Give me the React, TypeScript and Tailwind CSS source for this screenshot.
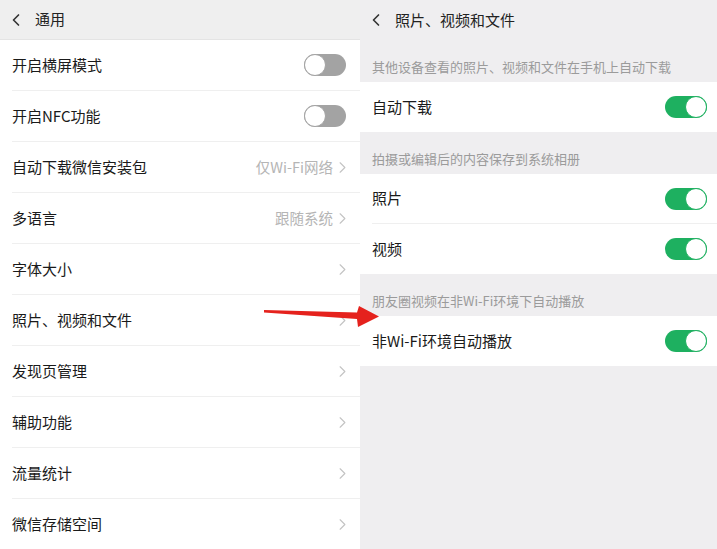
import { ChevronRight, ChevronLeft } from "lucide-react";

const FONT = { fontFamily: '"Noto Sans CJK SC", "Noto Sans", sans-serif' };

type Row = { label: string; kind: "toggle" | "link"; value?: string };

const generalRows: Row[] = [
  { label: "开启横屏模式", kind: "toggle" },
  { label: "开启NFC功能", kind: "toggle" },
  { label: "自动下载微信安装包", kind: "link", value: "仅Wi-Fi网络" },
  { label: "多语言", kind: "link", value: "跟随系统" },
  { label: "字体大小", kind: "link" },
  { label: "照片、视频和文件", kind: "link" },
  { label: "发现页管理", kind: "link" },
  { label: "辅助功能", kind: "link" },
  { label: "流量统计", kind: "link" },
  { label: "微信存储空间", kind: "link" },
];

const mediaSections = [
  { title: "其他设备查看的照片、视频和文件在手机上自动下载", rows: ["自动下载"] },
  { title: "拍摄或编辑后的内容保存到系统相册", rows: ["照片", "视频"] },
  { title: "朋友圈视频在非Wi-Fi环境下自动播放", rows: ["非Wi-Fi环境自动播放"] },
];

function Switch({ on }: { on: boolean }) {
  return (
    <div
      className={`w-[42px] h-[22px] rounded-full flex items-center ${
        on ? "bg-[#1eb060] justify-end" : "bg-[#a3a3a3] justify-start"
      }`}
    >
      <div
        className={`w-[22px] h-[22px] rounded-full bg-white border-[1.5px] ${
          on ? "border-[#1eb060]" : "border-[#a3a3a3]"
        }`}
      />
    </div>
  );
}

export default function App() {
  return (
    <div className="relative flex w-[717px] h-[549px] overflow-hidden" style={FONT}>
      {/* 通用 */}
      <div className="w-[360px] h-full bg-white flex flex-col">
        <div className="h-[40px] shrink-0 bg-[#efefef] flex items-center pl-[6px] gap-x-[9px] border-b border-[#e4e4e4]">
          <ChevronLeft className="w-[20px] h-[20px] text-[#333]" strokeWidth={2} />
          <span className="text-[15px] text-[#222]">通用</span>
        </div>
        {generalRows.map((r) => (
          <div
            key={r.label}
            className="h-[51px] shrink-0 ml-[12px] pr-[8px] flex items-center justify-between border-b border-[#efefef]"
          >
            <span className="text-[15px] text-[#1a1a1a]">{r.label}</span>
            {r.kind === "toggle" ? (
              <div className="pr-[6px]">
                <Switch on={false} />
              </div>
            ) : (
              <div className="flex items-center">
                {r.value && <span className="text-[14.5px] text-[#b5b5b5]">{r.value}</span>}
                <ChevronRight className="w-[19px] h-[19px] text-[#c3c3c3]" strokeWidth={1.4} />
              </div>
            )}
          </div>
        ))}
      </div>

      {/* 照片、视频和文件 */}
      <div className="flex-1 h-full bg-[#efeef0] flex flex-col">
        <div className="h-[40px] shrink-0 flex items-center pl-[6px] gap-x-[9px]">
          <ChevronLeft className="w-[20px] h-[20px] text-[#333]" strokeWidth={2} />
          <span className="text-[15px] text-[#222]">照片、视频和文件</span>
        </div>
        {mediaSections.map((s) => (
          <div key={s.title} className="flex flex-col">
            <div className="h-[42px] flex items-end pb-[6px] pl-[12px] text-[13px] text-[#9b9b9b]">
              {s.title}
            </div>
            <div className="bg-white">
              {s.rows.map((label, i) => (
                <div
                  key={label}
                  className={`h-[50px] ml-[12px] pr-[10px] flex items-center justify-between ${
                    i < s.rows.length - 1 ? "border-b border-[#efefef]" : ""
                  }`}
                >
                  <span className="text-[15px] text-[#1a1a1a]">{label}</span>
                  <Switch on />
                </div>
              ))}
            </div>
          </div>
        ))}
      </div>

      {/* red arrow pointing at the media settings */}
      <svg className="absolute left-0 top-0 pointer-events-none" width="717" height="549">
        <polygon
          points="264,310 357,312.5 359,306 379,316.5 358,327 357,319 264,312.5"
          fill="#e5221d"
        />
      </svg>
    </div>
  );
}
